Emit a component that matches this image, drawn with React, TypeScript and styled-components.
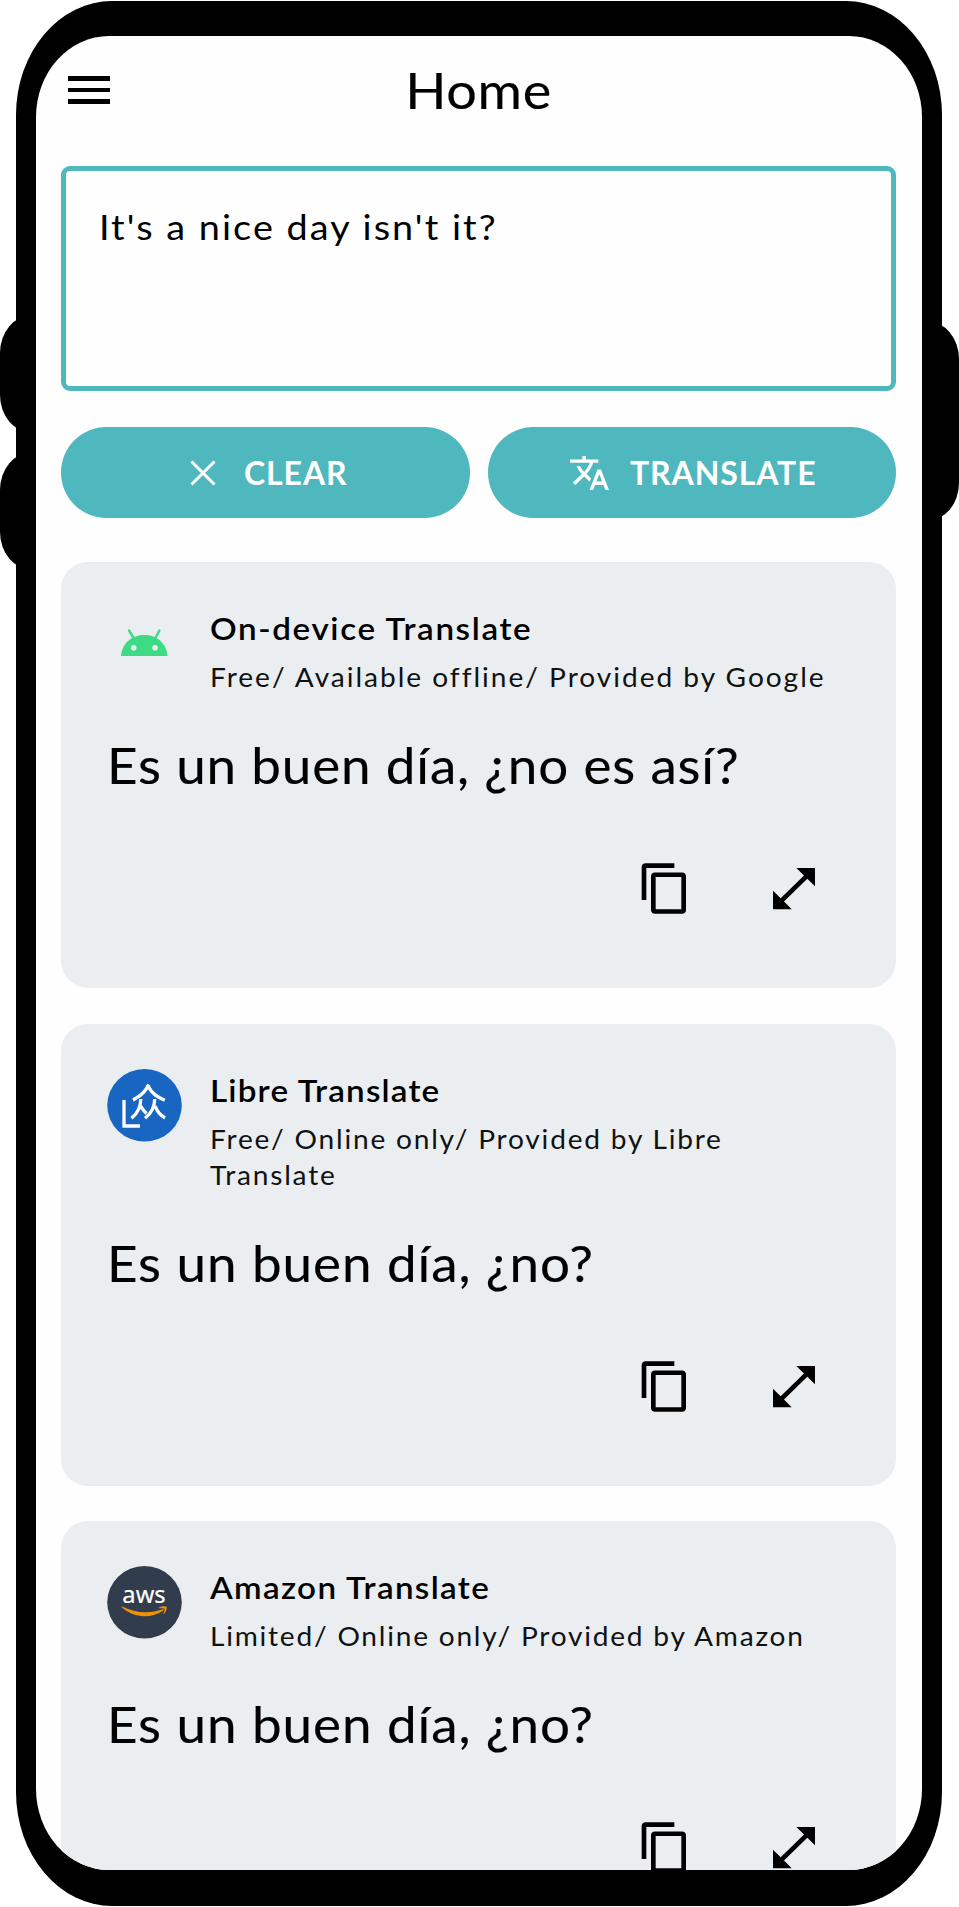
import React from 'react';
import styled, { createGlobalStyle } from 'styled-components';

const teal = '#4fb7be';

const GlobalStyle = createGlobalStyle`
  * { box-sizing: border-box; }
  body { margin: 0; background: #fff; }
  button { font: inherit; border: 0; margin: 0; cursor: pointer; }
`;

const Stage = styled.div`
  position: relative;
  width: 959px;
  height: 1907px;
  padding: 1px 17px 1px 16px;
  overflow: hidden;
  font-family: Lato, 'Open Sans', sans-serif;
  color: #000;
`;

const SideKey = styled.span<{ $side: 'left' | 'right'; $top: number; $height: number }>`
  position: absolute;
  ${(p) => p.$side}: 0;
  top: ${(p) => p.$top}px;
  width: 70px;
  height: ${(p) => p.$height}px;
  background: #000;
  border-radius: 32px / 38px;
`;

const Phone = styled.div`
  position: relative;
  height: 1905px;
  padding: 35px 20px 36px;
  background: #000;
  border-radius: 96px / 114px;
`;

const Screen = styled.main`
  height: 100%;
  padding: 0 26px 0 25px;
  background: #fefefe;
  border-radius: 73px / 81px;
  overflow: hidden;
`;

const TopBar = styled.header`
  display: grid;
  grid-template-columns: 60px 1fr 60px;
  align-items: center;
  height: 107px;
  margin-bottom: 23px;
`;

const MenuButton = styled.button`
  display: flex;
  flex-direction: column;
  gap: 6.5px;
  width: 49px;
  padding: 1px 0 0 7px;
  background: none;
`;

const MenuLine = styled.span`
  height: 4.8px;
  background: #000;
`;

const PageTitle = styled.h1`
  margin: 0;
  padding-top: 1px;
  text-align: center;
  font-size: 51px;
  font-weight: 400;
  line-height: 60px;
  letter-spacing: 0.6px;
  transform: scaleX(1.06);
  -webkit-text-stroke: 0.15px;
`;

const SourceBox = styled.div`
  height: 225px;
  padding: 30px 33px;
  border: 5px solid ${teal};
  border-radius: 9px;
`;

const SourceText = styled.p`
  margin: 0;
  font-size: 35px;
  line-height: 50px;
  letter-spacing: 1.9px;
  transform: scaleX(1.08);
  transform-origin: left;
`;

const ButtonRow = styled.div`
  display: grid;
  grid-template-columns: 1fr 1fr;
  gap: 18px;
  margin: 36px 0 44px;
`;

const PillButton = styled.button<{ $gap: number; $shift: number }>`
  display: flex;
  align-items: center;
  justify-content: center;
  gap: ${(p) => p.$gap}px;
  height: 91px;
  padding: 0 0 0 ${(p) => p.$shift}px;
  border-radius: 46px;
  background: ${teal};
  color: #fff;
  font-size: 32px;
  font-weight: 700;
  letter-spacing: 0.9px;
`;

const CardList = styled.div`
  display: flex;
  flex-direction: column;
  gap: 35.5px;
`;

const Card = styled.article`
  display: flex;
  flex-direction: column;
  padding: 45px 74px 72px 46px;
  background: #eaeef1;
  border-radius: 27px;
`;

const CardHead = styled.div`
  display: flex;
  gap: 28px;
  min-height: 88px;
`;

const Avatar = styled.svg`
  flex: none;
  width: 75px;
  height: 73px;
`;

const CardTitle = styled.h2<{ $tracking: number }>`
  margin: 1px 0 11px;
  font-size: 31px;
  font-weight: 600;
  line-height: 40px;
  letter-spacing: ${(p) => p.$tracking}px;
  transform: scaleX(1.07);
  transform-origin: left;
`;

const CardMeta = styled.p<{ $tracking: number }>`
  margin: 0 15px 0 0;
  font-size: 26.5px;
  line-height: 36px;
  color: #111;
  letter-spacing: ${(p) => p.$tracking}px;
  transform: scaleX(1.06);
  transform-origin: left;
`;

const Translation = styled.p<{ $tracking: number }>`
  margin: 40px 0 66px;
  font-size: 50px;
  line-height: 60px;
  white-space: nowrap;
  letter-spacing: ${(p) => p.$tracking}px;
  transform: scaleX(1.06);
  transform-origin: left;
  -webkit-text-stroke: 0.15px;
`;

const Actions = styled.div`
  display: flex;
  justify-content: flex-end;
  gap: 73px;
`;

const ActionButton = styled.button`
  display: flex;
  padding: 0;
  background: none;
  color: #000;
`;

const CopyIcon = () => (
  <svg width="56" height="55" viewBox="0 0 24 24" preserveAspectRatio="none" fill="currentColor">
    <path d="M16 1H3.7C2.7 1 2 1.7 2 2.7V17h2V3h12V1z" />
    <path d="M19.3 5H7.7C6.7 5 6 5.7 6 6.5v15c0 .8.7 1.5 1.7 1.5h11.6c1 0 1.7-.7 1.7-1.5v-15C21 5.7 20.3 5 19.3 5zm-.3 16H8V7h11v14z" />
  </svg>
);

const ExpandIcon = () => (
  <svg width="56" height="55" viewBox="0 0 24 24" preserveAspectRatio="none" fill="currentColor">
    <path d="M21 11V3h-8l3.29 3.29-10 10L3 13v8h8l-3.29-3.29 10-10z" />
  </svg>
);

const CloseIcon = () => (
  <svg width="26" height="26" viewBox="0 0 26 26" stroke="currentColor" strokeWidth="3.1">
    <path d="M1.5 1.5l23 23M24.5 1.5l-23 23" />
  </svg>
);

const TranslateIcon = () => (
  <svg width="39" height="34" viewBox="1 2 22 20" preserveAspectRatio="none" fill="currentColor">
    <path d="M12.87 15.07l-2.54-2.51.03-.03c1.74-1.94 2.98-4.17 3.71-6.53H17V4h-7V2H8v2H1v1.99h11.17C11.5 7.92 10.44 9.75 9 11.35 8.07 10.32 7.3 9.19 6.69 8h-2c.73 1.63 1.73 3.17 2.98 4.56l-5.09 5.02L4 19l5-5 3.11 3.11.76-2.04zM18.5 10h-2L12 22h2l1.12-3h4.75L21 22h2l-4.5-12zm-2.62 7l1.62-4.33L19.12 17h-3.24z" />
  </svg>
);

const AndroidLogo = () => (
  <Avatar viewBox="0 0 75 73">
    <path d="M14 49C15 36 25 28 37.3 28S59.5 36 60.5 49z" fill="#3ddc84" />
    <path d="M22 23.5l5.5 9M52.5 23.5l-5 9" stroke="#3ddc84" strokeWidth="2.4" strokeLinecap="round" />
    <circle cx="26.7" cy="40.7" r="2.8" fill="#eaeef1" />
    <circle cx="48" cy="40.7" r="2.8" fill="#eaeef1" />
  </Avatar>
);

const LibreLogo = () => (
  <Avatar viewBox="0 0 75 73">
    <ellipse cx="37.5" cy="36.3" rx="37.3" ry="36.3" fill="#1866c2" />
    <g fill="none" stroke="#fff" strokeWidth="3.3">
      <path d="M17 31v26h16" />
      <path d="M41.7 15.5C39 22 33 27.5 26 31M41.7 18C44 23 50 28 57.8 31.3" />
      <path d="M33.8 30c0 8-3 14-9.3 19.3M34 37c1 3 3 5 5.5 7.5" />
      <path d="M47.7 30c0 8-3 14-9.7 19.3M48.2 37c1.5 5 5 9 9.8 12" />
    </g>
  </Avatar>
);

const AwsLogo = () => (
  <Avatar viewBox="0 0 75 73">
    <ellipse cx="37.5" cy="36.3" rx="37.3" ry="36.3" fill="#313d4c" />
    <text x="37" y="37.3" fill="#fff" stroke="#fff" strokeWidth=".2" fontFamily="'Noto Sans', sans-serif" fontSize="23.7" textAnchor="middle">
      aws
    </text>
    <g fill="#f29100">
      <path d="M15.3 40.5C28 47.2 43 48 55.5 43.2c1-.4 1.6.5.8 1.2C45 52.5 27 52.5 15 41.6c-.6-.6-.2-1.3.3-1.1z" />
      <path d="M52 41.6c2.5-1.8 6-1.7 7.5-1 .8 1.6-.5 5.5-2.3 7.1-.6.5-1 .2-.7-.5.8-1.8 1.4-3.9.9-4.5-.6-.6-3-.5-4.7-.4-.8.1-1.2-.3-.7-.7z" />
    </g>
  </Avatar>
);

const results = [
  {
    logo: <AndroidLogo />,
    title: 'On-device Translate',
    titleTracking: 1.52,
    meta: 'Free/ Available offline/ Provided by Google',
    metaTracking: 1.86,
    text: 'Es un buen día, ¿no es así?',
    textTracking: 0.78,
  },
  {
    logo: <LibreLogo />,
    title: 'Libre Translate',
    titleTracking: 1.1,
    meta: 'Free/ Online only/ Provided by Libre Translate',
    metaTracking: 1.68,
    text: 'Es un buen día, ¿no?',
    textTracking: 0.87,
  },
  {
    logo: <AwsLogo />,
    title: 'Amazon Translate',
    titleTracking: 1.25,
    meta: 'Limited/ Online only/ Provided by Amazon',
    metaTracking: 1.67,
    text: 'Es un buen día, ¿no?',
    textTracking: 0.87,
  },
];

export default function App() {
  return (
    <Stage>
      <GlobalStyle />
      <SideKey $side="left" $top={315} $height={118} />
      <SideKey $side="left" $top={452} $height={118} />
      <SideKey $side="right" $top={321} $height={200} />
      <Phone>
        <Screen>
          <TopBar>
            <MenuButton aria-label="Menu">
              <MenuLine />
              <MenuLine />
              <MenuLine />
            </MenuButton>
            <PageTitle>Home</PageTitle>
          </TopBar>
          <SourceBox>
            <SourceText>It's a nice day isn't it?</SourceText>
          </SourceBox>
          <ButtonRow>
            <PillButton $gap={28} $shift={7}>
              <CloseIcon />
              CLEAR
            </PillButton>
            <PillButton $gap={21} $shift={3}>
              <TranslateIcon />
              TRANSLATE
            </PillButton>
          </ButtonRow>
          <CardList>
            {results.map((r) => (
              <Card key={r.title}>
                <CardHead>
                  {r.logo}
                  <div>
                    <CardTitle $tracking={r.titleTracking}>{r.title}</CardTitle>
                    <CardMeta $tracking={r.metaTracking}>{r.meta}</CardMeta>
                  </div>
                </CardHead>
                <Translation $tracking={r.textTracking}>{r.text}</Translation>
                <Actions>
                  <ActionButton aria-label="Copy">
                    <CopyIcon />
                  </ActionButton>
                  <ActionButton aria-label="Expand">
                    <ExpandIcon />
                  </ActionButton>
                </Actions>
              </Card>
            ))}
          </CardList>
        </Screen>
      </Phone>
    </Stage>
  );
}
